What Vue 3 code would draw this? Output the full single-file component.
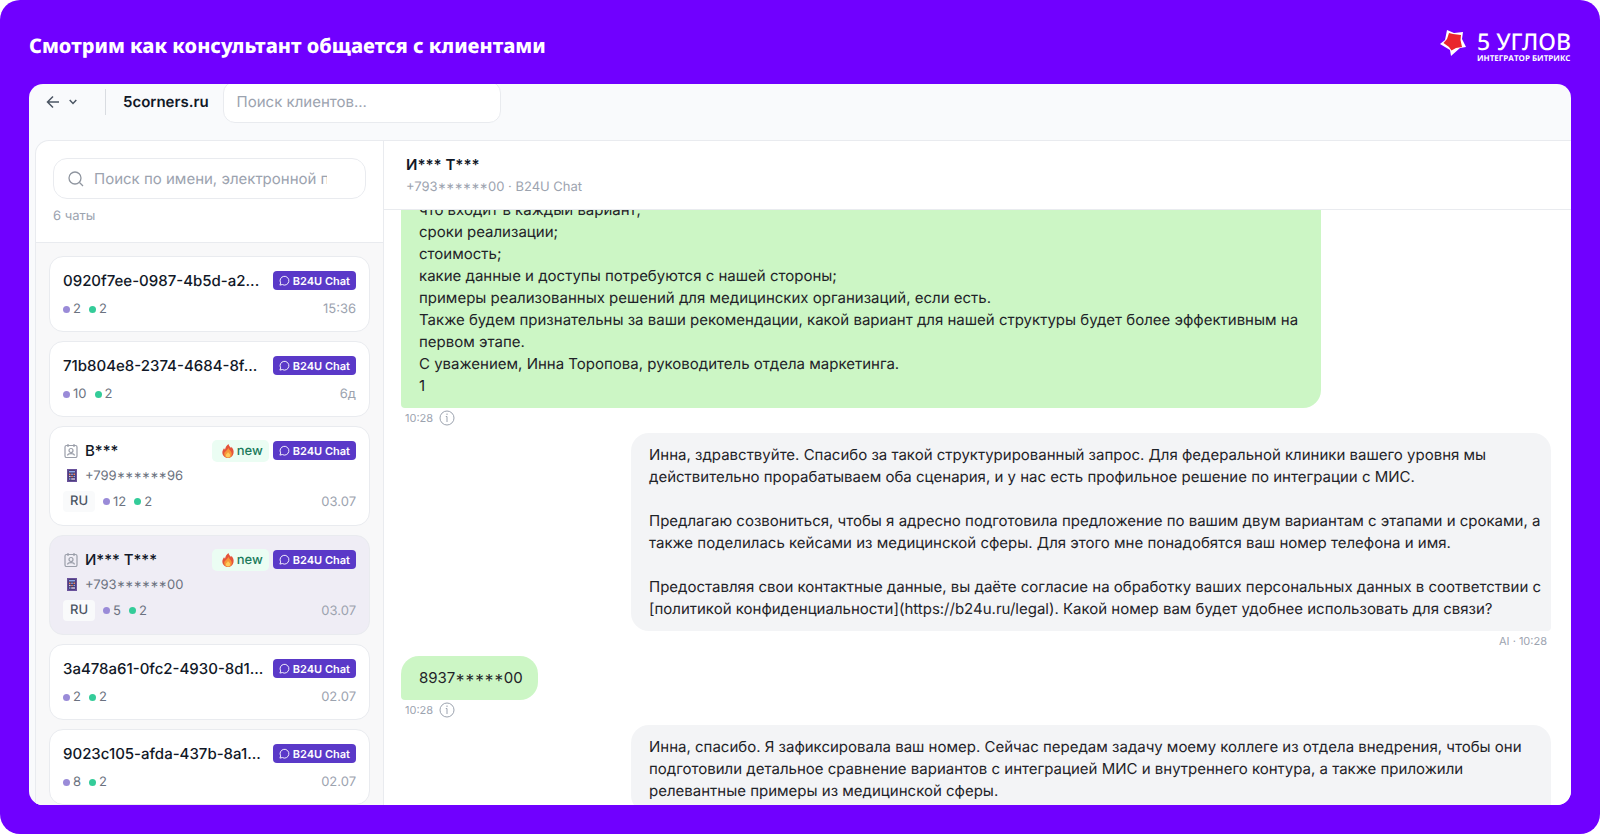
<script setup>
import { ref } from "vue";

const clientSearch = ref("");
const chatSearch = ref("");
const activeChat = ref(4);

const chats = ref([
  { id: 1, name: "0920f7ee-0987-4b5d-a2...", inbound: 2, outbound: 2, date: "15:36" },
  { id: 2, name: "71b804e8-2374-4684-8f...", inbound: 10, outbound: 2, date: "6д" },
  { id: 3, name: "В***", phone: "+799******96", lang: "RU", inbound: 12, outbound: 2, date: "03.07" },
  { id: 4, name: "И*** Т***", phone: "+793******00", lang: "RU", inbound: 5, outbound: 2, date: "03.07" },
  { id: 5, name: "3a478a61-0fc2-4930-8d1...", inbound: 2, outbound: 2, date: "02.07" },
  { id: 6, name: "9023c105-afda-437b-8a1...", inbound: 8, outbound: 2, date: "02.07" },
]);

const messages = ref([
  {
    id: 1,
    from: "client",
    time: "10:28",
    text: `что входит в каждый вариант;
сроки реализации;
стоимость;
какие данные и доступы потребуются с нашей стороны;
примеры реализованных решений для медицинских организаций, если есть.
Также будем признательны за ваши рекомендации, какой вариант для нашей структуры будет более эффективным на первом этапе.
С уважением, Инна Торопова, руководитель отдела маркетинга.
1`,
  },
  {
    id: 2,
    from: "ai",
    time: "AI · 10:28",
    text: `Инна, здравствуйте. Спасибо за такой структурированный запрос. Для федеральной клиники вашего уровня мы действительно прорабатываем оба сценария, и у нас есть профильное решение по интеграции с МИС.

Предлагаю созвониться, чтобы я адресно подготовила предложение по вашим двум вариантам с этапами и сроками, а также поделилась кейсами из медицинской сферы. Для этого мне понадобятся ваш номер телефона и имя.

Предоставляя свои контактные данные, вы даёте согласие на обработку ваших персональных данных в соответствии с [политикой конфиденциальности](https://b24u.ru/legal). Какой номер вам будет удобнее использовать для связи?`,
  },
  { id: 3, from: "client", time: "10:28", text: "8937*****00" },
  {
    id: 4,
    from: "ai",
    time: "AI · 10:28",
    text: `Инна, спасибо. Я зафиксировала ваш номер. Сейчас передам задачу моему коллеге из отдела внедрения, чтобы они подготовили детальное сравнение вариантов с интеграцией МИС и внутреннего контура, а также приложили релевантные примеры из медицинской сферы.`,
  },
]);
</script>

<template>
  <div class="slide">
    <header class="slide-header">
      <h1>Смотрим как консультант общается с клиентами</h1>
      <div class="brand">
        <svg class="brand-mark" viewBox="0 0 26 26">
          <path fill="#fff" d="M7 0 14 3 23 2 22 9 26 17 20 18 11 26 10 20 0 14 5 10z" />
          <path fill="#e9262d" d="M9 3 13 4 21 5 20.500 10 22 17 16 18 11.500 20.500 9 17 3.500 13 7 9z" />
        </svg>
        <div class="brand-text">
          <span class="brand-name">5 УГЛОВ</span>
          <span class="brand-sub">ИНТЕГРАТОР БИТРИКС</span>
        </div>
      </div>
    </header>

    <main class="window">
      <div class="toolbar">
        <button class="back" aria-label="Назад">
          <svg width="14" height="14" viewBox="0 0 14 14">
            <path d="M13 7H1.500M7 1.500 1.500 7 7 12.500" />
          </svg>
          <svg width="8" height="6" viewBox="0 0 8 6">
            <path d="M0.700 1 4 4.500 7.300 1" />
          </svg>
        </button>
        <span class="site">5corners.ru</span>
        <input
          v-model="clientSearch"
          class="client-search"
          type="text"
          aria-label="Поиск клиентов"
          placeholder="Поиск клиентов..."
        />
      </div>

      <div class="panels">
        <aside class="sidebar">
          <div class="sidebar-head">
            <label class="chat-search">
              <svg width="16" height="16" viewBox="0 0 16 16">
                <circle cx="7" cy="7" r="6" />
                <path d="m11.500 11.500 3.500 3.500" />
              </svg>
              <input
                v-model="chatSearch"
                type="text"
                aria-label="Поиск по чатам"
                placeholder="Поиск по имени, электронной почте"
              />
            </label>
            <p class="count">6 чаты</p>
          </div>
          <div class="chat-list">
            <button
              v-for="chat in chats"
              :key="chat.id"
              class="chat"
              :class="{ active: chat.id === activeChat }"
              @click="activeChat = chat.id"
            >
              <span class="chat-top">
                <svg v-if="chat.phone" class="contact-icon" width="14" height="14" viewBox="0 0 14 14">
                  <rect x="1" y="1.500" width="12" height="12" rx="1.500" />
                  <path d="M4 0v3M10 0v3M3.500 11.500c.5-2.500 6.500-2.500 7 0" />
                  <circle cx="7" cy="6.500" r="2" />
                </svg>
                <span class="chat-name">{{ chat.name }}</span>
                <span v-if="chat.phone" class="new">
                  <svg width="12" height="14" viewBox="0 0 12 14">
                    <path fill="#e5533a" d="M6.500 0C6.800 1.800 8 2.800 9 4c.4-.4.500-.8.5-1.300C11 4.500 12 6.500 11.500 9.200 11 12.200 8.500 14 6 14S.8 12.200.4 9.200C.1 7 1.200 5.700 2 4.300c.5.500.7.9 1 1.500C3.300 3.500 4.500 1.500 6.500 0z" />
                    <path fill="#f7953a" d="M6.500 3.500C6.500 6 9.800 7 9.800 10c0 2.200-1.600 3.700-3.800 3.700S2.200 12.200 2.200 10c0-2.500 3.300-3.500 4.300-6.500z" />
                    <path fill="#fdcb5c" d="M6 8c.5 1 2.200 1.700 2.200 3.300 0 1.400-1 2.200-2.200 2.200s-2.200-.8-2.200-2.200C3.800 9.900 5.500 9.500 6 8z" />
                  </svg>
                  new
                </span>
                <span class="channel">
                  <svg width="12" height="12" viewBox="0 0 12 12">
                    <path d="M1 11 1.800 8.600A4.800 4.800 0 1 1 3.600 10.400z" />
                  </svg>
                  B24U Chat
                </span>
              </span>
              <span v-if="chat.phone" class="chat-phone">
                <svg width="10" height="13" viewBox="0 0 10 13">
                  <path fill="#6a529c" d="M0 0h10v13H0z" />
                  <path fill="#2f2a5c" d="M1.500 1.500h7v10h-7z" />
                  <path fill="#8fa8e8" d="M2 2h6v1.500H2zM4.200 4.500h1.600V6H4.200zM6.400 6.800H8v1.500H6.400zM2 9.200h1.600v1.500H2z" />
                  <path fill="#f08a6a" d="M2 4.500h1.600V6H2zM6.400 4.500H8V6H6.400zM4.200 6.800h1.600v1.500H4.200z" />
                  <path fill="#d9c9e8" d="M2 6.800h1.600v1.500H2zM4.200 9.200H8v1.500H4.200z" />
                </svg>
                {{ chat.phone }}
              </span>
              <span class="chat-bottom">
                <span v-if="chat.lang" class="lang">{{ chat.lang }}</span>
                <span class="stat inbound">{{ chat.inbound }}</span>
                <span class="stat outbound">{{ chat.outbound }}</span>
                <span class="date">{{ chat.date }}</span>
              </span>
            </button>
          </div>
        </aside>

        <section class="dialog">
          <div class="dialog-head">
            <h2>И*** Т***</h2>
            <p>+793******00 · B24U Chat</p>
          </div>
          <div class="messages">
            <article v-for="message in messages" :key="message.id" class="message" :class="message.from">
              <p class="bubble">{{ message.text }}</p>
              <div class="meta">
                {{ message.time }}
                <button v-if="message.from === 'client'" class="info" aria-label="Информация">
                  <svg width="16" height="16" viewBox="0 0 16 16">
                    <circle cx="8" cy="8" r="7" />
                    <path d="M6.800 6.500H8V12M8 3.500V5" />
                  </svg>
                </button>
              </div>
            </article>
          </div>
        </section>
      </div>
    </main>
  </div>
</template>

<style>
body {
  margin: 0;
  background-color: #ffffff;
}
</style>

<style scoped>
* {
  box-sizing: border-box;
}

.slide {
  display: flex;
  flex-direction: column;
  height: 100vh;
  padding: 0 29px 29px;
  border-radius: 20px;
  background-color: #7000ff;
  font-family: Inter, "Liberation Sans", sans-serif;
  text-rendering: geometricPrecision;
  overflow: hidden;
}

button,
input {
  font-family: inherit;
  text-rendering: inherit;
}

button {
  padding: 0;
  border: none;
  background: none;
  cursor: pointer;
}

h1,
h2,
p {
  margin: 0;
}

svg {
  flex: none;
  fill: none;
}

.slide-header {
  display: flex;
  flex: none;
  align-items: center;
  justify-content: space-between;
  height: 84px;
  padding-top: 7px;
}

h1 {
  color: white;
  font-family: "Noto Sans", "Open Sans", sans-serif;
  font-size: 20px;
  font-weight: 800;
}

.brand {
  display: flex;
  align-items: center;
  gap: 11px;
  color: white;
}

.brand-mark {
  width: 26px;
  height: 26px;
  margin-bottom: 6px;
}

.brand-text {
  display: flex;
  flex-direction: column;
}

.brand-name {
  font-family: "Noto Sans", sans-serif;
  font-size: 23px;
  font-weight: 500;
  line-height: 26px;
}

.brand-sub {
  font-family: "Open Sans", sans-serif;
  font-size: 8px;
  font-weight: 700;
  line-height: 10px;
}

.window {
  display: flex;
  flex: 1;
  flex-direction: column;
  min-height: 0;
  border-radius: 14px;
  background-color: #f9fafc;
  overflow: hidden;
}

.toolbar {
  display: flex;
  flex: none;
  align-items: center;
  height: 56px;
  padding: 0 17px 21px;
}

.back {
  display: flex;
  align-items: center;
  gap: 9px;
  height: 26px;
  padding-right: 28px;
  border-right: 1px solid #d9dce1;
}

.back svg {
  stroke: #4b5563;
  stroke-width: 1.5;
}

.site {
  margin-left: 17px;
  color: #111827;
  font-size: 15px;
  font-weight: 600;
}

.client-search {
  width: 278px;
  height: 42px;
  margin-left: 14px;
  padding: 0 13px;
  border: 1px solid #e9ebef;
  border-radius: 12px;
  background-color: white;
  font-size: 15px;
  outline: none;
}

input::placeholder {
  color: #9ca3af;
  opacity: 1;
}

.panels {
  display: flex;
  flex: 1;
  min-height: 0;
  margin-left: 6px;
  border: 1px solid #e9ebef;
  border-width: 1px 0 0 1px;
  border-radius: 14px 0 0 0;
  background-color: white;
  overflow: hidden;
}

.sidebar {
  display: flex;
  flex: none;
  flex-direction: column;
  width: 348px;
  border-right: 1px solid #e9ebef;
}

.sidebar-head {
  height: 102px;
  padding: 17px 17px 0;
  border-bottom: 1px solid #e9ebef;
}

.chat-search {
  display: flex;
  align-items: center;
  gap: 10px;
  height: 41px;
  padding: 0 38px 0 14px;
  border: 1px solid #e9ebef;
  border-radius: 14px;
}

.chat-search svg {
  stroke: #8f959f;
  stroke-width: 1.3;
}

.chat-search input {
  flex: 1;
  min-width: 0;
  padding: 0;
  border: none;
  font-size: 15px;
  outline: none;
}

.count {
  margin-top: 8px;
  color: #9ca3af;
  font-size: 13px;
  line-height: 18px;
}

.chat-list {
  display: flex;
  flex: 1;
  flex-direction: column;
  gap: 9px;
  min-height: 0;
  padding: 13px;
  background-color: #f8f8f9;
  overflow: hidden;
}

.chat {
  display: flex;
  flex: none;
  flex-direction: column;
  padding: 12px 13px 11px;
  border: 1px solid #e9ebef;
  border-radius: 14px;
  background-color: white;
  text-align: left;
}

.chat.active {
  background-color: #efedf5;
}

.chat-top {
  display: flex;
  align-items: center;
  width: 100%;
  height: 23px;
}

.contact-icon {
  margin: 0 7px 0 1px;
  stroke: #9a9ea9;
  stroke-width: 1.2;
}

.chat-name {
  flex: 1;
  min-width: 0;
  margin-right: 4px;
  color: #111827;
  font-size: 15px;
  font-weight: 500;
  white-space: nowrap;
}

.new {
  display: flex;
  align-items: center;
  gap: 3px;
  height: 22px;
  margin-right: 4px;
  padding: 0 6px 0 10px;
  border-radius: 5px;
  background-color: #ebfdf3;
  color: #1b7b5c;
  font-size: 13px;
  font-weight: 500;
}

.channel {
  display: flex;
  flex: none;
  align-items: center;
  gap: 3px;
  height: 19px;
  padding: 0 6px;
  border-radius: 4px;
  background-color: #5a39c8;
  color: white;
  font-size: 11px;
  font-weight: 600;
}

.channel svg {
  width: 11px;
  height: 11px;
  stroke: white;
}

.chat-phone {
  display: flex;
  align-items: center;
  gap: 8px;
  height: 27px;
  padding-left: 4px;
  color: #6b7280;
  font-size: 13px;
  font-feature-settings: "case";
}

.chat-bottom {
  display: flex;
  align-items: center;
  gap: 8px;
  width: 100%;
  height: 25px;
  color: #6b7280;
  font-size: 13px;
}

.chat-top + .chat-bottom {
  height: 22px;
  margin-top: 6px;
}

.lang {
  padding: 0 7px;
  border-radius: 4px;
  background-color: #f9fafb;
  color: #4b5563;
  font-weight: 500;
  line-height: 21px;
}

.stat {
  display: flex;
  align-items: center;
  gap: 3px;
}

.stat::before {
  content: "";
  width: 7px;
  height: 7px;
  border-radius: 50%;
}

.inbound::before {
  background-color: #9a8bd8;
}

.outbound::before {
  background-color: #34cc99;
}

.date {
  margin-left: auto;
  color: #9ca3af;
}

.dialog {
  display: flex;
  flex: 1;
  flex-direction: column;
  min-width: 0;
}

.dialog-head {
  flex: none;
  height: 69px;
  padding: 13px 22px 0;
  border-bottom: 1px solid #e9ebef;
}

h2 {
  color: #111827;
  font-size: 15px;
  font-weight: 600;
  line-height: 22px;
}

.dialog-head p {
  color: #9ca3af;
  font-size: 13px;
  font-feature-settings: "case";
  line-height: 22px;
}

/* older lines run under the header */
.messages {
  display: flex;
  flex: 1;
  flex-direction: column;
  min-height: 0;
  padding: 0 20px 0 17px;
  overflow: hidden;
}

.message {
  display: flex;
  flex: none;
  flex-direction: column;
  align-items: flex-start;
}

.message.ai {
  align-items: flex-end;
}

.bubble {
  max-width: 80%;
  padding: 11px 15px 11px 18px;
  border-radius: 18px 18px 18px 4px;
  background-color: #ccf6c5;
  color: #1f2328;
  font-size: 15px;
  line-height: 22px;
  white-space: pre-line;
}

.client .bubble {
  font-feature-settings: "case";
}

.message:first-child {
  margin-top: -22px;
}

.ai .bubble {
  padding-right: 8px;
  border-radius: 18px 18px 4px 18px;
  background-color: #f3f4f6;
}

.meta {
  display: flex;
  align-items: center;
  gap: 6px;
  height: 19px;
  margin-bottom: 6px;
  padding: 0 4px;
  color: #9ca3af;
  font-size: 11px;
}

.info {
  display: flex;
}

.info svg {
  stroke: #9ca3af;
}
</style>
